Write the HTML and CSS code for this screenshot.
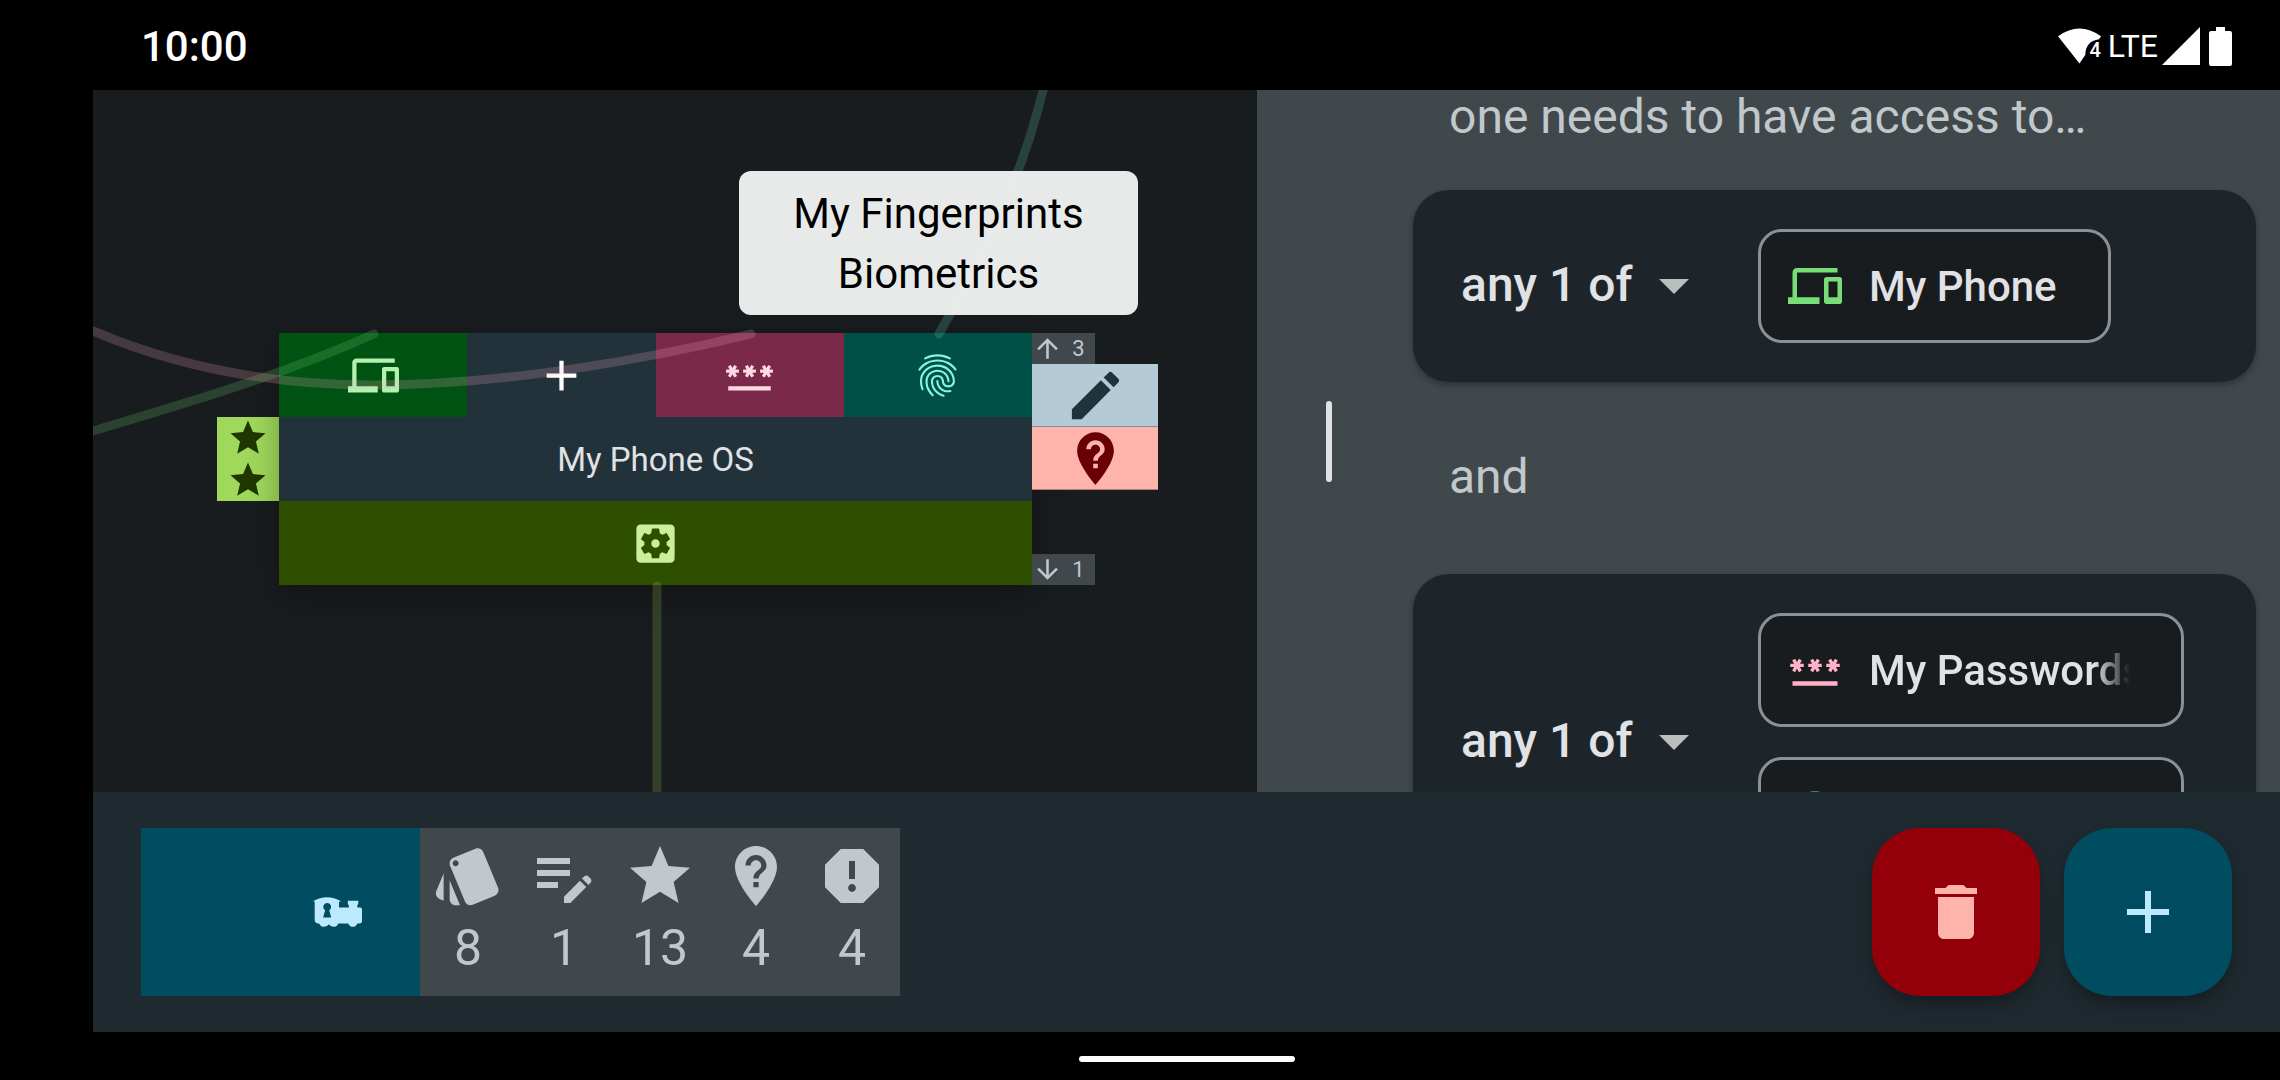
FILE: index.html
```html
<!DOCTYPE html>
<html lang="en">
<head>
<meta charset="utf-8">
<meta name="viewport" content="width=device-width, initial-scale=1">
<title>My Phone OS</title>
<link rel="stylesheet" href="styles.css">
</head>
<body>
<svg class="sprite" aria-hidden="true">
  <symbol id="devices" viewBox="0 0 24 24"><path d="M4 6h18V4H4c-1.1 0-2 .9-2 2v11H0v3h14v-3H4V6zm19 2h-6c-.55 0-1 .45-1 1v10c0 .55.45 1 1 1h6c.55 0 1-.45 1-1V9c0-.55-.45-1-1-1zm-1 9h-4v-7h4v7z"/></symbol>
  <symbol id="plus" viewBox="0 0 24 24"><path d="M19 13h-6v6h-2v-6H5v-2h6V5h2v6h6v2z"/></symbol>
  <symbol id="password" viewBox="0 0 24 24"><path d="M2 17h20v2H2v-2zm1.15-4.05L4 11.47l.85 1.48 1.3-.75-.85-1.48H7v-1.5H5.3l.85-1.47L4.85 7 4 8.47 3.15 7l-1.3.75.85 1.47H1v1.5h1.7l-.85 1.48 1.3.75zm6.7-.75l1.3.75.85-1.48.85 1.48 1.3-.75-.85-1.48H15v-1.5h-1.7l.85-1.47-1.3-.75L12 8.47 11.15 7l-1.3.75.85 1.47H9v1.5h1.7l-.85 1.48zm13.15-2.98h-1.7l.85-1.47-1.3-.75L20 8.47 19.15 7l-1.3.75.85 1.47H17v1.5h1.7l-.85 1.48 1.3.75.85-1.48.85 1.48 1.3-.75-.85-1.48H23v-1.5z"/></symbol>
  <symbol id="fingerprint" viewBox="0 0 24 24"><path d="M17.81 4.47c-.08 0-.16-.02-.23-.06C15.66 3.42 14 3 12.01 3c-1.98 0-3.86.47-5.57 1.41-.24.13-.54.04-.68-.2-.13-.24-.04-.55.2-.68C7.82 2.52 9.86 2 12.01 2c2.13 0 3.99.47 6.03 1.52.25.13.34.43.21.67-.09.18-.26.28-.44.28zM3.5 9.72c-.1 0-.2-.03-.29-.09-.23-.16-.28-.47-.12-.7.99-1.4 2.25-2.5 3.75-3.27C9.98 4.04 14 4.03 17.15 5.65c1.5.77 2.76 1.86 3.75 3.25.16.22.11.54-.12.7-.23.16-.54.11-.7-.12-.9-1.26-2.04-2.25-3.39-2.94-2.87-1.47-6.54-1.47-9.4.01-1.36.7-2.5 1.7-3.4 2.96-.08.14-.23.21-.39.21zm6.25 12.07c-.13 0-.26-.05-.35-.15-.87-.87-1.34-1.43-2.01-2.64-.69-1.23-1.05-2.73-1.05-4.34 0-2.97 2.54-5.39 5.66-5.39s5.66 2.42 5.66 5.39c0 .28-.22.5-.5.5s-.5-.22-.5-.5c0-2.42-2.09-4.39-4.66-4.39-2.57 0-4.66 1.97-4.66 4.39 0 1.44.32 2.77.93 3.85.64 1.15 1.08 1.64 1.85 2.42.19.2.19.51 0 .71-.11.1-.24.15-.37.15zm7.17-1.85c-1.19 0-2.24-.3-3.1-.89-1.49-1.01-2.38-2.65-2.38-4.39 0-.28.22-.5.5-.5s.5.22.5.5c0 1.41.72 2.74 1.94 3.56.71.48 1.54.71 2.54.71.24 0 .64-.03 1.04-.1.27-.05.53.13.58.41.05.27-.13.53-.41.58-.57.11-1.07.12-1.21.12zM14.91 22c-.04 0-.09-.01-.13-.02-1.59-.44-2.63-1.03-3.72-2.1-1.4-1.39-2.17-3.24-2.17-5.22 0-1.62 1.38-2.94 3.08-2.94 1.7 0 3.08 1.32 3.08 2.94 0 1.07.93 1.94 2.08 1.94s2.08-.87 2.08-1.94c0-3.77-3.25-6.83-7.25-6.83-2.84 0-5.44 1.58-6.61 4.03-.39.81-.59 1.76-.59 2.8 0 .78.07 2.01.67 3.61.1.26-.03.55-.29.64-.26.1-.55-.04-.64-.29-.49-1.31-.73-2.61-.73-3.96 0-1.2.23-2.29.68-3.24 1.33-2.79 4.28-4.6 7.51-4.6 4.55 0 8.25 3.51 8.25 7.83 0 1.62-1.38 2.94-3.08 2.94s-3.08-1.32-3.08-2.94c0-1.07-.93-1.94-2.08-1.94s-2.08.87-2.08 1.94c0 1.71.66 3.31 1.87 4.51.95.94 1.86 1.46 3.27 1.85.27.07.42.35.35.61-.05.23-.26.38-.47.38z"/></symbol>
  <symbol id="settings" viewBox="0 0 24 24"><path d="M12 10c-1.1 0-2 .9-2 2s.9 2 2 2 2-.9 2-2-.9-2-2-2zm7-7H5c-1.11 0-2 .9-2 2v14c0 1.1.89 2 2 2h14c1.11 0 2-.9 2-2V5c0-1.1-.89-2-2-2zm-1.75 9c0 .23-.02.46-.05.68l1.48 1.16c.13.11.17.3.08.45l-1.4 2.42c-.09.15-.27.21-.43.15l-1.74-.7c-.36.28-.76.51-1.18.69l-.26 1.85c-.03.17-.18.3-.35.3h-2.8c-.17 0-.32-.13-.35-.29l-.26-1.85c-.43-.18-.82-.41-1.18-.69l-1.74.7c-.16.06-.34 0-.43-.15l-1.4-2.42c-.09-.15-.05-.34.08-.45l1.48-1.16c-.03-.23-.05-.46-.05-.69 0-.23.02-.46.05-.68l-1.48-1.16c-.13-.11-.17-.3-.08-.45l1.4-2.42c.09-.15.27-.21.43-.15l1.74.7c.36-.28.76-.51 1.18-.69l.26-1.85c.03-.17.18-.3.35-.3h2.8c.17 0 .32.13.35.29l.26 1.85c.43.18.82.41 1.18.69l1.74-.7c.16-.06.34 0 .43.15l1.4 2.42c.09.15.05.34-.08.45l-1.48 1.16c.03.23.05.46.05.69z"/></symbol>
  <symbol id="star" viewBox="0 0 24 24"><path d="M12 17.27L18.18 21l-1.64-7.03L22 9.24l-7.19-.61L12 2 9.19 8.63 2 9.24l5.46 4.73L5.82 21z"/></symbol>
  <symbol id="pencil" viewBox="0 0 24 24"><path d="M3 17.25V21h3.75L17.81 9.94l-3.75-3.75L3 17.25zM20.71 7.04c.39-.39.39-1.02 0-1.41l-2.34-2.34c-.39-.39-1.02-.39-1.41 0l-1.83 1.83 3.75 3.75 1.83-1.83z"/></symbol>
  <symbol id="unlisted" viewBox="0 0 24 24"><path d="M12 2C8.14 2 5 5.14 5 9c0 5.25 7 13 7 13s7-7.75 7-13c0-3.86-3.14-7-7-7zm.88 13.75h-1.75V14h1.75v1.75zm0-2.88h-1.75c0-2.84 2.62-2.62 2.62-4.38 0-.96-.79-1.75-1.75-1.75s-1.75.79-1.75 1.75H8.5C8.5 6.57 10.07 5 12 5s3.5 1.57 3.5 3.5c0 2.19-2.62 2.41-2.62 4.37z"/></symbol>
  <symbol id="arrow-up" viewBox="0 0 24 24"><path d="M4 12l1.41 1.41L11 7.83V20h2V7.83l5.58 5.59L20 12l-8-8-8 8z"/></symbol>
  <symbol id="arrow-down" viewBox="0 0 24 24"><path d="M20 12l-1.41-1.41L13 16.17V4h-2v12.17l-5.58-5.59L4 12l8 8 8-8z"/></symbol>
  <symbol id="cards" viewBox="0 0 24 24"><path d="M2.53 19.65l1.34.56v-9.03l-2.43 5.86c-.41 1.02.08 2.19 1.09 2.61zm19.5-3.7L17.07 3.98c-.31-.75-1.04-1.21-1.81-1.23-.26 0-.53.04-.79.15L7.1 5.95c-.75.31-1.21 1.03-1.23 1.8-.01.27.04.54.15.8l4.96 11.97c.31.76 1.05 1.22 1.83 1.23.26 0 .52-.05.77-.15l7.36-3.05c1.02-.42 1.51-1.59 1.09-2.6zM7.88 8.75c-.55 0-1-.45-1-1s.45-1 1-1 1 .45 1 1-.45 1-1 1zm-2 11c0 1.1.9 2 2 2h1.45l-3.45-8.34v6.34z"/></symbol>
  <symbol id="edit-note" viewBox="0 0 24 24"><path d="M3 10h11v2H3v-2zm0-2h11V6H3v2zm0 8h7v-2H3v2zm15.01-3.13.71-.71c.39-.39 1.02-.39 1.41 0l.71.71c.39.39.39 1.02 0 1.41l-.71.71-2.12-2.12zm-.71.71-5.3 5.3V21h2.12l5.3-5.3-2.12-2.12z"/></symbol>
  <symbol id="report" viewBox="0 0 24 24"><path d="M15.73 3H8.27L3 8.27v7.46L8.27 21h7.46L21 15.73V8.27L15.73 3zM12 17.3c-.72 0-1.3-.58-1.3-1.3 0-.72.58-1.3 1.3-1.3.72 0 1.3.58 1.3 1.3 0 .72-.58 1.3-1.3 1.3zm1-4.3h-2V7h2v6z"/></symbol>
  <symbol id="trash" viewBox="0 0 24 24"><path d="M6 19c0 1.1.9 2 2 2h8c1.1 0 2-.9 2-2V7H6v12zM19 4h-3.5l-.71-.71c-.18-.18-.44-.29-.7-.29H9.91c-.26 0-.52.11-.7.29L8.5 4H5v2h14V4z"/></symbol>
  <symbol id="caret" viewBox="0 0 30 15"><path d="M0 0h30L15 15z"/></symbol>
</svg>

<div class="screen">
  <header class="status-bar">
    <time class="clock">10:00</time>
    <div class="status-icons">
      <span class="wifi">
        <svg viewBox="0 0 44 36" aria-hidden="true"><path d="M0 8Q22-8 44 8L42 11Q28 13 28 27L22 36z"/></svg>
        <span class="wifi-level">4</span>
      </span>
      <span class="network">LTE</span>
      <svg class="signal" viewBox="0 0 38 38" aria-hidden="true"><path d="M38 0v38H0z"/></svg>
      <svg class="battery" viewBox="0 0 23 39" aria-hidden="true"><path d="M7 0h9v4h5a2 2 0 0 1 2 2v31a2 2 0 0 1-2 2H2a2 2 0 0 1-2-2V6a2 2 0 0 1 2-2h5z"/></svg>
    </div>
  </header>

  <main class="workspace">
    <section class="graph" aria-label="Account graph">
      <div class="rating">
        <svg class="icon-42"><use href="#star"/></svg>
        <svg class="icon-42"><use href="#star"/></svg>
      </div>
      <article class="node">
        <button class="cell device" aria-label="My Phone"><svg class="icon-51"><use href="#devices"/></svg></button>
        <button class="cell add" aria-label="Add"><svg class="icon-51"><use href="#plus"/></svg></button>
        <button class="cell password" aria-label="My Passwords"><svg class="icon-51"><use href="#password"/></svg></button>
        <button class="cell biometric" aria-label="My Fingerprints"><svg class="icon-51"><use href="#fingerprint"/></svg></button>
        <h2 class="node-title">My Phone OS</h2>
        <button class="cell system" aria-label="System"><svg class="icon-51"><use href="#settings"/></svg></button>
      </article>
      <div class="node-tabs">
        <span class="count"><svg><use href="#arrow-up"/></svg><span>3</span></span>
        <button class="tab edit" aria-label="Edit"><svg class="icon-63"><use href="#pencil"/></svg></button>
        <button class="tab unknown" aria-label="Unknown"><svg class="icon-63"><use href="#unlisted"/></svg></button>
        <span class="count last"><svg><use href="#arrow-down"/></svg><span>1</span></span>
      </div>
      <svg class="edges" aria-hidden="true">
        <path class="edge-password" d="M-20 232C-12 236-6 239 0 241C82 276 177 295 280 295C407 295 547 271 658 244"/>
        <path class="edge-device" d="M-20 347L0 341C97 312 192 284 281 244"/>
        <path class="edge-biometric" d="M846 244C892 162 929 90 952-8"/>
        <path class="edge-system" d="M564 496V720"/>
      </svg>
      <div class="tooltip" role="tooltip"><span>My Fingerprints</span><span>Biometrics</span></div>
    </section>

    <aside class="details">
      <div class="handle-column"><span class="drag-handle"></span></div>
      <div class="conditions">
        <p class="lead">one needs to have access to…</p>
        <section class="card">
          <label class="quantity">
            <select aria-label="Required from this group"><option>any 1 of</option></select>
            <svg class="caret"><use href="#caret"/></svg>
          </label>
          <div class="chips">
            <button class="chip device-chip"><svg class="icon-54"><use href="#devices"/></svg><span>My Phone</span></button>
          </div>
        </section>
        <p class="joiner">and</p>
        <section class="card">
          <label class="quantity">
            <select aria-label="Required from this group"><option>any 1 of</option></select>
            <svg class="caret"><use href="#caret"/></svg>
          </label>
          <div class="chips">
            <button class="chip password-chip wide"><svg class="icon-54"><use href="#password"/></svg><span>My Passwords</span></button>
            <button class="chip biometric-chip wide"><svg class="icon-54"><use href="#fingerprint"/></svg><span>My Fingerprints</span></button>
          </div>
        </section>
      </div>
    </aside>
  </main>

  <footer class="bottom-bar">
    <button class="train" aria-label="Home">
      <svg viewBox="0 0 145 88"><path fill-rule="evenodd" d="M0 12Q41-12 83 12L77 14V31H106V24Q103 22 103 17V11H134V17Q134 22 131 24V31H140Q145 31 145 36V71Q145 78 137 78H131Q127 88 118 88Q109 88 104 78H75Q71 88 61 88Q52 88 47 80Q42 88 32 88Q23 88 18 78H14Q5 76 5 68V13zM42 17A12 12 0 0 0 36 39L30 60H54L48 39A12 12 0 0 0 42 17z"/></svg>
    </button>
    <ul class="stats">
      <li><svg class="icon-72"><use href="#cards"/></svg><span>8</span></li>
      <li><svg class="icon-72"><use href="#edit-note"/></svg><span>1</span></li>
      <li><svg class="icon-72"><use href="#star"/></svg><span>13</span></li>
      <li><svg class="icon-72"><use href="#unlisted"/></svg><span>4</span></li>
      <li><svg class="icon-72"><use href="#report"/></svg><span>4</span></li>
    </ul>
    <div class="actions">
      <button class="fab delete" aria-label="Delete"><svg class="icon-72"><use href="#trash"/></svg></button>
      <button class="fab create" aria-label="Add"><svg class="icon-72"><use href="#plus"/></svg></button>
    </div>
  </footer>

  <div class="nav-bar"><span class="gesture-pill"></span></div>
</div>
</body>
</html>
```
FILE: styles.css
```css
*,
*::before,
*::after {
  box-sizing: border-box;
}

body {
  margin: 0;
  background: #000;
  color: #e1e2e5;
  font-family: Roboto, "Liberation Sans", sans-serif;
}

p,
h2,
ul {
  margin: 0;
  padding: 0;
}

button,
select {
  margin: 0;
  padding: 0;
  border: 0;
  background: none;
  color: inherit;
  font: inherit;
}

svg {
  display: block;
  flex: none;
  fill: currentColor;
}

.sprite {
  position: absolute;
  width: 0;
  height: 0;
}

.icon-42 { width: 42px; height: 42px; }
.icon-51 { width: 51px; height: 51px; }
.icon-54 { width: 54px; height: 54px; }
.icon-63 { width: 63px; height: 63px; }
.icon-72 { width: 72px; height: 72px; }

.screen {
  display: flex;
  flex-direction: column;
  height: 100vh;
}

/* Status bar */
.status-bar {
  display: flex;
  flex: none;
  align-items: center;
  justify-content: space-between;
  height: 90px;
  padding: 2px 48px 0 141px;
  color: #fff;
}

.clock {
  font-size: 42px;
  font-weight: 500;
}

.status-icons {
  display: flex;
  align-items: center;
}

.wifi {
  position: relative;
  margin-right: 7px;
}

.wifi svg {
  width: 43px;
  height: 36px;
}

.wifi-level {
  position: absolute;
  right: 0;
  bottom: 4px;
  font-size: 20px;
  font-weight: 500;
  line-height: 20px;
}

.network {
  margin-right: 4px;
  font-size: 32px;
}

.signal {
  width: 38px;
  height: 38px;
  margin-right: 9px;
}

.battery {
  width: 23px;
  height: 39px;
}

/* Graph */
.workspace {
  display: flex;
  flex: 1;
  min-height: 0;
  padding-left: 93px;
}

.graph {
  position: relative;
  flex: 1164;
  min-width: 0;
  overflow: hidden;
  background: #191c1e;
}

.rating {
  position: absolute;
  top: 327px;
  left: 124px;
  display: flex;
  flex-direction: column;
  align-items: center;
  width: 62px;
  background: #a0d85b;
  color: #1f3700;
}

.node {
  position: absolute;
  top: 243px;
  left: 186px;
  display: grid;
  grid-template-columns: repeat(4, 1fr);
  grid-auto-rows: 84px;
  width: 753px;
  background: #22323b;
  box-shadow: 0 12px 30px rgba(0, 0, 0, 0.3);
}

.cell {
  display: grid;
  place-items: center;
}

.device { background: #005312; color: #b2f2ae; }
.add { color: #fff; }
.password { background: #7b2949; color: #ffd9e2; }
.biometric { background: #005047; color: #84f5de; }

.system {
  grid-column: 1 / -1;
  background: #2e4f00;
  color: #caef9b;
}

.node-title {
  grid-column: 1 / -1;
  font-size: 33px;
  font-weight: 400;
  line-height: 86px;
  text-align: center;
}

.node-tabs {
  position: absolute;
  top: 243px;
  left: 939px;
  display: flex;
  flex-direction: column;
  align-items: flex-start;
  height: 252px;
}

.count {
  display: grid;
  grid-template-columns: 31px 31px;
  align-items: center;
  width: 63px;
  height: 31px;
  background: #40484b;
  color: #c0c8cd;
  font-size: 22px;
  line-height: 31px;
  text-align: center;
}

.count svg {
  width: 31px;
  height: 31px;
}

.count.last {
  margin-top: auto;
}

.tab {
  display: grid;
  place-items: center;
  width: 126px;
  height: 63px;
  border-bottom: 1px solid rgba(0, 0, 0, 0.3);
}

.edit { background: #b4cad6; color: #1f333c; }
.unknown { background: #ffb4ab; color: #690005; }

.edges {
  position: absolute;
  inset: 0;
  width: 100%;
  height: 100%;
  fill: none;
  stroke-width: 9px;
  stroke-linecap: round;
  pointer-events: none;
}

.edges path { stroke-opacity: 0.2; }
.edge-password { stroke: #ffb1c8; }
.edge-device { stroke: #78dd77; }
.edge-biometric { stroke: #65dbc5; }
.edge-system { stroke: #a0d85b; }

.tooltip {
  position: absolute;
  top: 81px;
  left: 646px;
  display: flex;
  flex-direction: column;
  width: 399px;
  padding: 13px 48px 11px;
  border-radius: 12px;
  background: rgba(240, 242, 241, 0.96);
  color: #000;
  font-size: 42px;
  line-height: 60px;
  text-align: center;
  white-space: nowrap;
}

.tooltip span {
  display: block;
}

/* Details pane */
.details {
  display: flex;
  flex: 1023;
  min-width: 0;
  overflow: hidden;
  background: #40484b;
}

.handle-column {
  display: grid;
  flex: none;
  place-items: center;
  width: 144px;
}

.drag-handle {
  width: 6px;
  height: 81px;
  border-radius: 3px;
  background: #e1e2e5;
}

.conditions {
  flex: 1;
  min-width: 0;
  padding: 0 24px 0 12px;
}

.lead,
.joiner {
  padding: 0 36px;
  color: #c0c8cc;
  font-size: 48px;
  line-height: 54px;
}

.lead {
  margin-bottom: 46px;
}

.joiner {
  margin: 68px 0 70px;
}

.card {
  display: grid;
  grid-template-columns: 297px minmax(0, 1fr);
  align-items: center;
  padding: 39px 72px 39px 48px;
  border-radius: 36px;
  background: #1d252b;
  box-shadow: 0 3px 6px rgba(0, 0, 0, 0.3);
}

.quantity {
  display: grid;
  align-items: center;
  width: 228px;
}

.quantity select {
  grid-area: 1 / 1;
  width: 100%;
  padding-bottom: 2px;
  appearance: none;
  font-size: 48px;
  font-weight: 500;
  line-height: 60px;
}

.caret {
  grid-area: 1 / 1;
  justify-self: end;
  width: 30px;
  height: 15px;
  color: #bbbebf;
  pointer-events: none;
}

.chips {
  display: flex;
  flex-direction: column;
  align-items: flex-start;
  gap: 30px;
}

.chip {
  display: flex;
  align-items: center;
  gap: 27px;
  max-width: 100%;
  height: 114px;
  padding: 0 51px 0 27px;
  border: 3px solid #8a9297;
  border-radius: 24px;
  background: #191c1e;
  color: #e1e2e5;
  font-size: 42px;
  font-weight: 500;
}

.chip span {
  flex: 1;
  min-width: 0;
  overflow: hidden;
  text-align: left;
  white-space: nowrap;
}

.chip.wide {
  width: 100%;
}

.chip.wide span {
  mask-image: linear-gradient(to left, transparent, #000 36px);
}

.device-chip svg { color: #78dd77; }
.password-chip svg { color: #ffb1c8; }
.biometric-chip svg { color: #65dbc5; }

/* Bottom bar */
.bottom-bar {
  display: flex;
  flex: none;
  align-items: center;
  margin-left: 93px;
  padding: 36px 48px;
  background: #1f2a30;
}

.train {
  display: flex;
  align-items: center;
  justify-content: flex-end;
  width: 279px;
  height: 168px;
  padding-right: 58px;
  background: #004d62;
  color: #bde9ff;
}

.train svg {
  width: 49px;
  height: 30px;
}

.stats {
  display: grid;
  grid-template-columns: repeat(5, 96px);
  height: 168px;
  background: #40484b;
  color: #c0c8cd;
  list-style: none;
}

.stats li {
  display: flex;
  flex-direction: column;
  align-items: center;
  padding-top: 12px;
  font-size: 50px;
  line-height: 72px;
}

.actions {
  display: flex;
  gap: 24px;
  margin-left: auto;
}

.fab {
  display: grid;
  place-items: center;
  width: 168px;
  height: 168px;
  border-radius: 48px;
  box-shadow: 0 9px 18px rgba(0, 0, 0, 0.3);
}

.delete { background: #93000a; color: #ffb4ab; }
.create { background: #004d62; color: #bde9ff; }

.nav-bar {
  display: grid;
  flex: none;
  place-items: center;
  height: 48px;
  padding: 6px 0 0 93px;
}

.gesture-pill {
  width: 216px;
  height: 6px;
  border-radius: 3px;
  background: #fff;
}
```
